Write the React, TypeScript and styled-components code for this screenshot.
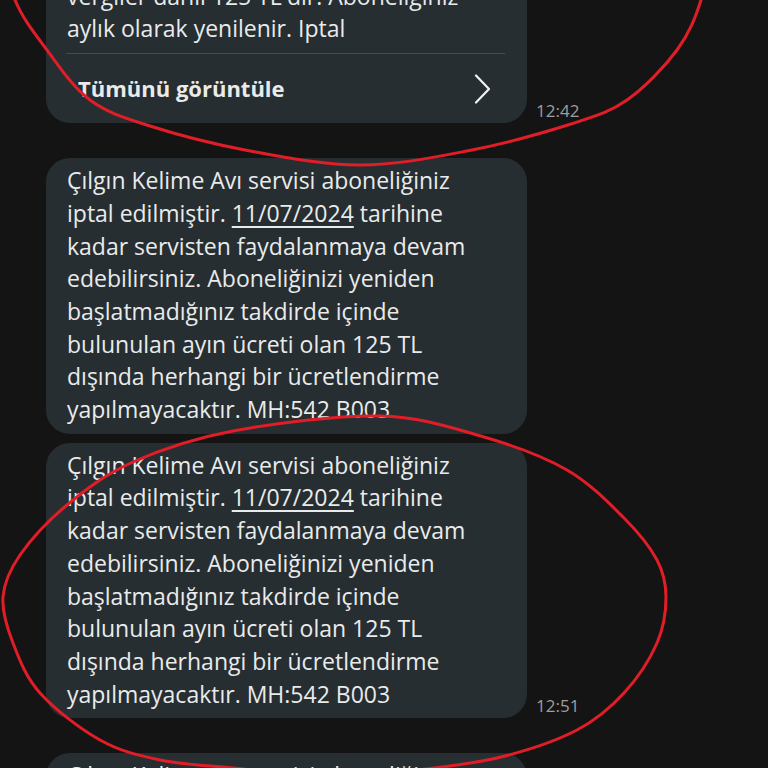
import React from 'react';
import styled, { createGlobalStyle } from 'styled-components';

const GlobalStyle = createGlobalStyle`
  html, body {
    margin: 0;
    padding: 0;
    background: #141414;
  }
  body {
    font-family: "Open Sans", "Noto Sans", sans-serif;
    -webkit-font-smoothing: antialiased;
  }
`;

const Screen = styled.div`
  position: relative;
  width: 768px;
  height: 768px;
  overflow: hidden;
  background: #141414;
`;

const Thread = styled.div`
  display: flex;
  flex-direction: column;
  padding-left: 46px;
  margin-top: -59px;
`;

const Row = styled.div<{ $gap: number }>`
  display: flex;
  align-items: flex-end;
  gap: 9px;
  margin-top: ${(p) => p.$gap}px;
`;

const Bubble = styled.div<{ $footer?: boolean }>`
  width: 481px;
  flex: none;
  box-sizing: border-box;
  background: #262e32;
  border-radius: 24px;
  padding: 6px 20px ${(p) => (p.$footer ? 0 : 8)}px 21px;
  color: #e9ebeb;
  font-size: 23px;
  line-height: 32.7px;
`;

const Line = styled.div`
  white-space: nowrap;
`;

const DateLink = styled.span`
  text-decoration: underline;
  text-decoration-thickness: 1.5px;
  text-underline-offset: 4px;
`;

const Divider = styled.div`
  height: 1px;
  width: 439px;
  margin: 8px 0 0 -1px;
  background: #434c51;
`;

const Footer = styled.div`
  display: flex;
  align-items: center;
  justify-content: space-between;
  height: 69px;
  padding: 0 16px 0 11px;
  font-weight: 700;
  font-size: 22px;
`;

const Chevron = styled.svg`
  width: 17px;
  height: 30px;
  flex: none;
`;

const Time = styled.span`
  font-size: 17px;
  line-height: 19px;
  color: #9d9e9f;
  margin-bottom: 3px;
`;

const Marks = styled.svg`
  position: absolute;
  inset: 0;
  width: 768px;
  height: 768px;
  pointer-events: none;
`;

type Pt = [number, number];

// catmull-rom through the hand-drawn marker points
function smooth(pts: Pt[], closed: boolean) {
  const n = pts.length;
  const at = (i: number): Pt => {
    if (closed) return pts[(i + n) % n];
    return pts[Math.max(0, Math.min(n - 1, i))];
  };
  let d = `M${pts[0][0]},${pts[0][1]}`;
  const segs = closed ? n : n - 1;
  for (let i = 0; i < segs; i++) {
    const p0 = at(i - 1), p1 = at(i), p2 = at(i + 1), p3 = at(i + 2);
    const c1 = [p1[0] + (p2[0] - p0[0]) / 6, p1[1] + (p2[1] - p0[1]) / 6];
    const c2 = [p2[0] - (p3[0] - p1[0]) / 6, p2[1] - (p3[1] - p1[1]) / 6];
    d += ` C${c1[0].toFixed(1)},${c1[1].toFixed(1)} ${c2[0].toFixed(1)},${c2[1].toFixed(1)} ${p2[0]},${p2[1]}`;
  }
  return closed ? d + ' Z' : d;
}

const topMark: Pt[] = [
  [2, -60], [15, 0], [47, 50], [90, 100], [150, 126], [250, 151],
  [360, 165], [467, 151], [571, 124], [627, 100], [677, 50], [701, 0], [712, -60],
];

const midMark: Pt[] = [
  [380, 416], [484, 437], [567, 470], [624, 518], [657, 560], [666, 597],
  [657, 643], [624, 693], [577, 730], [501, 757], [417, 770], [330, 776],
  [233, 768], [160, 760], [100, 740], [40, 693], [13, 643], [3, 597],
  [20, 555], [67, 505], [133, 462], [233, 431],
];

const cancelled = [
  'Çılgın Kelime Avı servisi aboneliğiniz',
  null,
  'kadar servisten faydalanmaya devam',
  'edebilirsiniz. Aboneliğinizi yeniden',
  'başlatmadığınız takdirde içinde',
  'bulunulan ayın ücreti olan 125 TL',
  'dışında herhangi bir ücretlendirme',
  'yapılmayacaktır. MH:542 B003',
];

function CancelText() {
  return (
    <>
      {cancelled.map((l, i) =>
        l === null ? (
          <Line key={i}>
            iptal edilmiştir. <DateLink>11/07/2024</DateLink> tarihine
          </Line>
        ) : (
          <Line key={i}>{l}</Line>
        )
      )}
    </>
  );
}

export default function App() {
  return (
    <Screen>
      <GlobalStyle />
      <Thread>
        <Row $gap={0}>
          <Bubble $footer>
            <Line>Çılgın Kelime Avı servisine abone oldunuz.</Line>
            <Line>vergiler dahil 125 TL'dir. Aboneliğiniz</Line>
            <Line>aylık olarak yenilenir. Iptal</Line>
            <Divider />
            <Footer>
              <span>Tümünü görüntüle</span>
              <Chevron viewBox="0 0 17 30" fill="none">
                <path d="M2 1.5 L15 15 L2 28.5" stroke="#f2f2f2" strokeWidth="2.2" strokeLinecap="round" strokeLinejoin="round" />
              </Chevron>
            </Footer>
          </Bubble>
          <Time>12:42</Time>
        </Row>
        <Row $gap={35}>
          <Bubble>
            <CancelText />
          </Bubble>
        </Row>
        <Row $gap={9}>
          <Bubble>
            <CancelText />
          </Bubble>
          <Time>12:51</Time>
        </Row>
        <Row $gap={35}>
          <Bubble>
            <CancelText />
          </Bubble>
        </Row>
      </Thread>
      <Marks viewBox="0 0 768 768">
        <path d={smooth(topMark, false)} fill="none" stroke="#e11d27" strokeWidth="3" strokeLinecap="round" />
        <path d={smooth(midMark, true)} fill="none" stroke="#e11d27" strokeWidth="3" />
      </Marks>
    </Screen>
  );
}
